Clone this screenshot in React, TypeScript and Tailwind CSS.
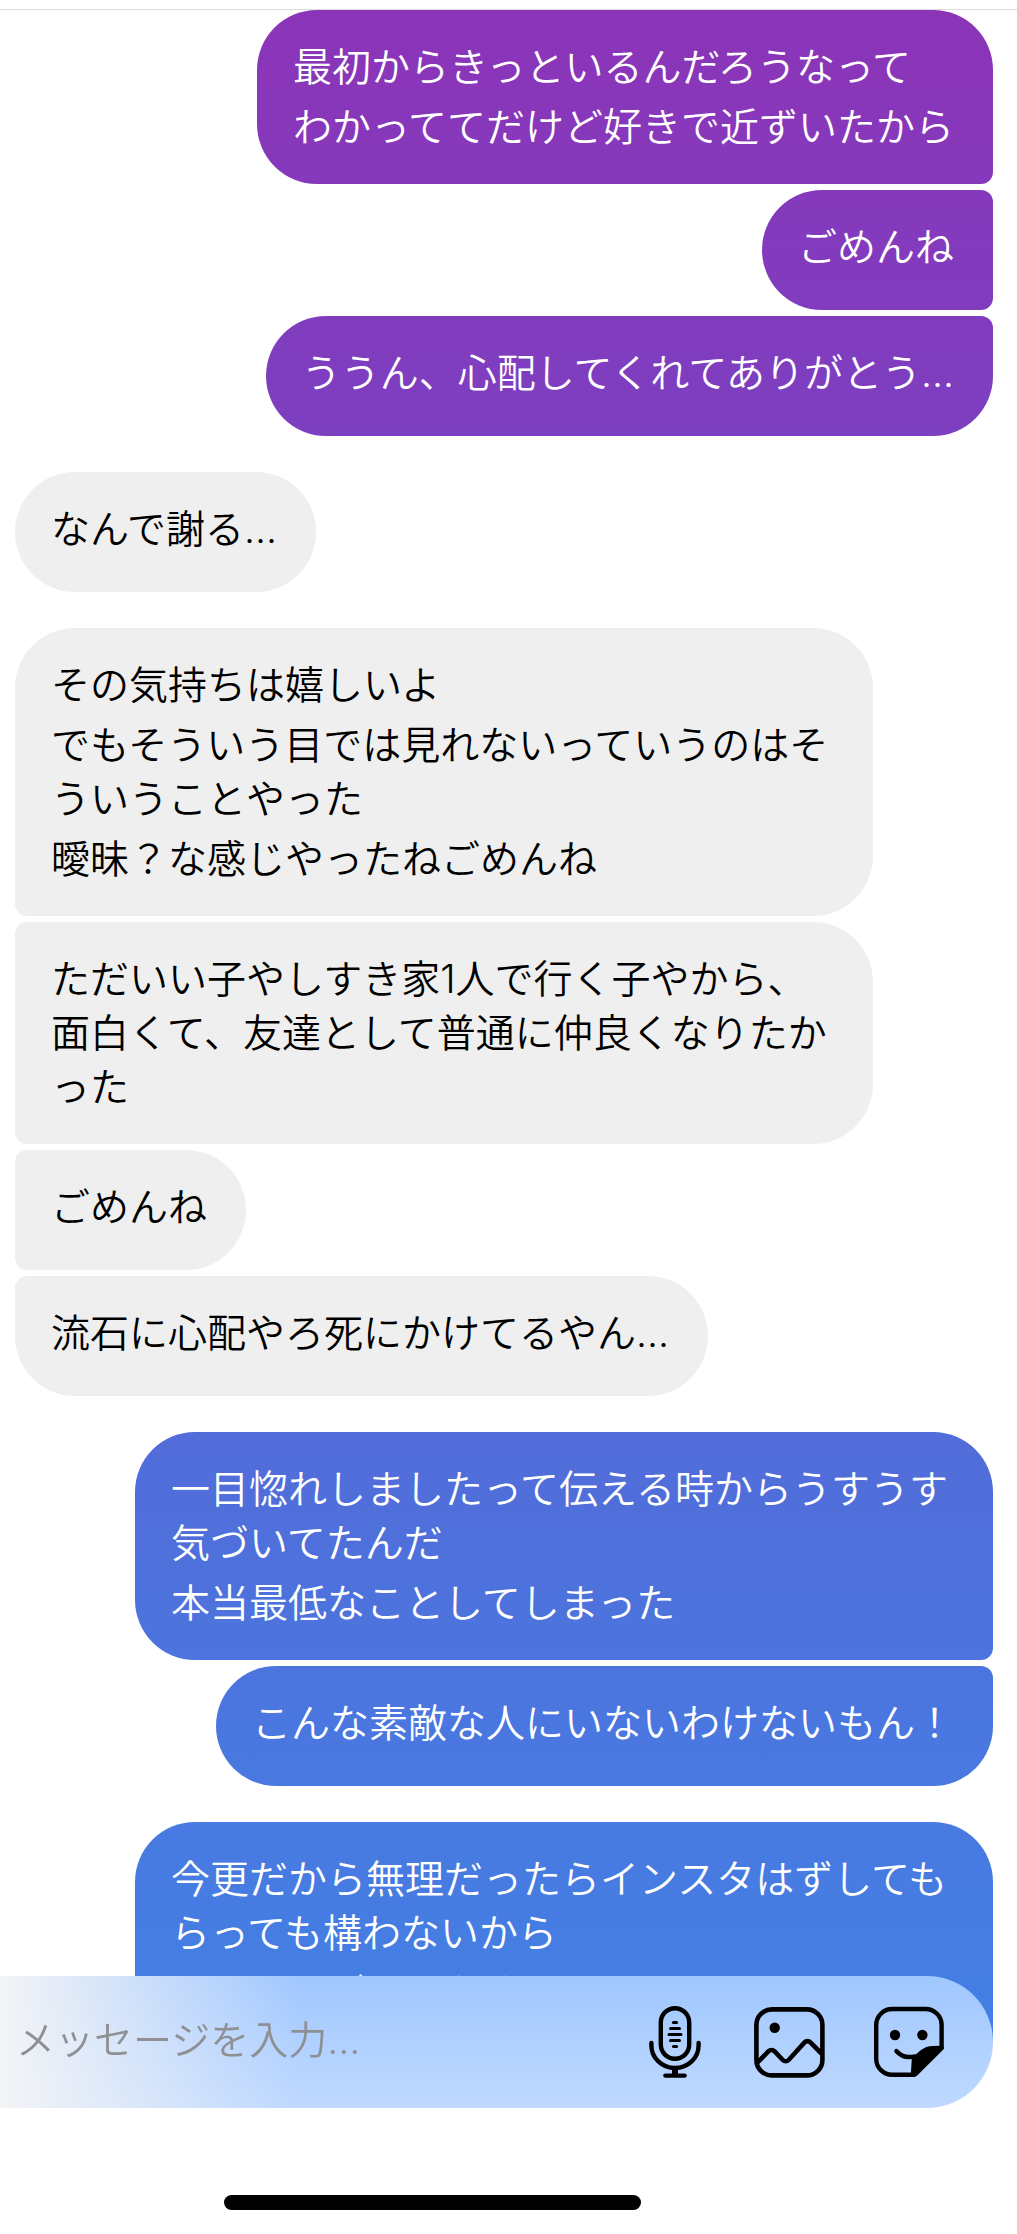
import type { ReactNode } from "react";
import clsx from "clsx";

interface Message {
  lines: string[];
  joinPrev?: boolean;
  joinNext?: boolean;
}

interface MessageGroup {
  from: "me" | "them";
  messages: Message[];
}

const groups: MessageGroup[] = [
  {
    from: "me",
    messages: [
      {
        lines: ["最初からきっといるんだろうなって", "わかっててだけど好きで近ずいたから"],
        joinNext: true,
      },
      { lines: ["ごめんね"], joinPrev: true, joinNext: true },
      { lines: ["ううん、心配してくれてありがとう..."], joinPrev: true },
    ],
  },
  {
    from: "them",
    messages: [{ lines: ["なんで謝る..."] }],
  },
  {
    from: "them",
    messages: [
      {
        lines: [
          "その気持ちは嬉しいよ",
          "でもそういう目では見れないっていうのはそういうことやった",
          "曖昧？な感じやったねごめんね",
        ],
        joinNext: true,
      },
      {
        lines: ["ただいい子やしすき家1人で行く子やから、面白くて、友達として普通に仲良くなりたかった"],
        joinPrev: true,
        joinNext: true,
      },
      { lines: ["ごめんね"], joinPrev: true, joinNext: true },
      { lines: ["流石に心配やろ死にかけてるやん..."], joinPrev: true },
    ],
  },
  {
    from: "me",
    messages: [
      {
        lines: ["一目惚れしましたって伝える時からうすうす気づいてたんだ", "本当最低なことしてしまった"],
        joinNext: true,
      },
      { lines: ["こんな素敵な人にいないわけないもん！"], joinPrev: true },
    ],
  },
  {
    from: "me",
    messages: [
      {
        lines: ["今更だから無理だったらインスタはずしてもらっても構わないから", "ほんとにごめんなさい"],
        joinNext: true,
      },
    ],
  },
];

function Bubble({ message, mine }: { message: Message; mine: boolean }) {
  return (
    <div
      className={clsx(
        "min-h-[120px] max-w-[858px] rounded-[60px] py-[30px] pr-[39px] pl-9",
        "flex flex-col gap-1.5 break-all",
        // 背景は画面全体で1つのグラデーション
        mine
          ? "self-end bg-[linear-gradient(to_bottom,#8c34b8,#7d3fc0_19%,#526cd9_64%,#4978e0_79%,#447fe3_90%)] bg-fixed text-white"
          : "self-start bg-[#efefef] text-black",
        mine && message.joinPrev && "rounded-tr-xl",
        mine && message.joinNext && "rounded-br-xl",
        !mine && message.joinPrev && "rounded-tl-xl",
        !mine && message.joinNext && "rounded-bl-xl"
      )}
    >
      {message.lines.map((line) => (
        <p key={line}>{line}</p>
      ))}
    </div>
  );
}

function IconButton({ label, className, children }: { label: string; className: string; children: ReactNode }) {
  return (
    <button type="button" aria-label={label} className={clsx("h-[72px] shrink-0 text-black", className)}>
      {children}
    </button>
  );
}

function MicIcon() {
  return (
    <svg viewBox="0 0 60 72" className="h-full w-full" fill="none" stroke="currentColor" strokeWidth="4.4" strokeLinecap="round">
      <rect x="15.8" y="2.2" width="28.4" height="50.6" rx="14.2" />
      <path d="M6.4 37v2.4a23.6 22.6 0 0 0 47.2 0V37" />
      <path d="M20.4 69.6h19.2" />
      <path d="M30 62v7" strokeWidth="6" strokeLinecap="butt" />
      <path d="M28.4 16.6h3.2M25.5 22.6h9M24 28.6h12M25.5 34.6h9M28.4 40.6h3.2" strokeWidth="3" />
    </svg>
  );
}

function ImageIcon() {
  return (
    <svg viewBox="0 0 72 72" className="h-full w-full" fill="none" stroke="currentColor" strokeWidth="4.6">
      <rect x="3.4" y="3.4" width="66" height="66" rx="15.5" />
      <circle cx="21.7" cy="21.7" r="5.2" fill="currentColor" stroke="none" />
      <path d="M4 57 15.6 45.2a4 4 0 0 1 5.8 0L29.8 54a4 4 0 0 0 5.8 0L51.6 36.4a4 4 0 0 1 5.8 0L69 48" />
    </svg>
  );
}

function StickerIcon() {
  return (
    <svg viewBox="0 0 72 72" className="h-full w-full" fill="none" stroke="currentColor" strokeWidth="4.4" strokeLinejoin="round">
      <path d="M40 68.8H19.6A16 16 0 0 1 3.2 52.6V19.2A16 16 0 0 1 19.4 3H52a16 16 0 0 1 16.6 16.2V42L43 67.4c-1 1-2 1.4-3 1.4Z" />
      <path d="M68.6 42 43 67.4c-1 1-2 1.4-3 1.4l1-16c4-2 7-9 16-10.4 4-.4 8-.4 11.6-.4Z" fill="currentColor" />
      <circle cx="22" cy="29" r="5.2" fill="currentColor" stroke="none" />
      <circle cx="49.4" cy="29" r="5.2" fill="currentColor" stroke="none" />
      <path d="M23.4 45c4.6 5.6 11 7 18.6 5.4" strokeLinecap="round" />
    </svg>
  );
}

function Composer() {
  return (
    <footer className="fixed inset-x-0 bottom-0">
      <div className="mr-6 flex h-[132px] items-center gap-12 rounded-r-full bg-linear-to-b from-[#a0c7ff] to-[#bfd9ff] pr-12">
        <div className="flex h-full min-w-0 flex-1 items-center bg-linear-to-r from-[#f3f4f6] to-transparent to-50%">
          <input
            type="text"
            aria-label="メッセージを入力"
            placeholder="メッセージを入力..."
            className="w-full bg-transparent pb-1 pl-4 leading-[54px] outline-none placeholder:text-[#8e9094]"
          />
        </div>
        <IconButton label="音声" className="w-[60px]">
          <MicIcon />
        </IconButton>
        <IconButton label="写真" className="w-[72px]">
          <ImageIcon />
        </IconButton>
        <IconButton label="スタンプ" className="w-[72px]">
          <StickerIcon />
        </IconButton>
      </div>
      <div className="h-[126px] bg-white pt-[87px]">
        <div className="ml-[22%] h-[15px] w-[41%] rounded-full bg-black" />
      </div>
    </footer>
  );
}

export default function App() {
  return (
    <div
      lang="ja"
      className="min-h-screen bg-white font-['Inter','Noto_Sans_CJK_JP',sans-serif] text-[39px] leading-[54px] font-[350]"
    >
      <header className="h-2.5 border-b border-[#dcdcdc]" />
      <main className="flex flex-col gap-9 pr-6 pb-[184px] pl-[15px]">
        {groups.map((group, i) => (
          <section key={i} className="flex flex-col gap-1.5">
            {group.messages.map((message) => (
              <Bubble key={message.lines[0]} message={message} mine={group.from === "me"} />
            ))}
          </section>
        ))}
      </main>
      <Composer />
    </div>
  );
}
